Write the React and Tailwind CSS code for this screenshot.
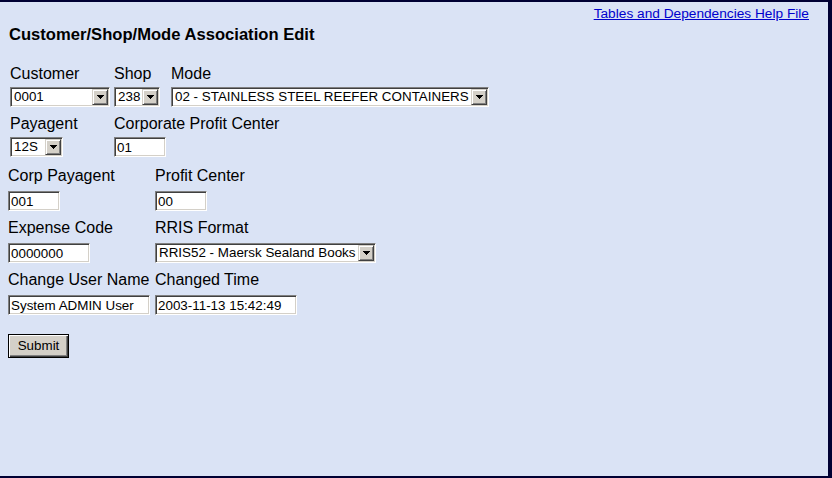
const sunken =
  'border border-t-[#808080] border-l-[#808080] border-r-white border-b-white shadow-[inset_1px_1px_0_#404040,inset_-1px_-1px_0_#d4d0c8] bg-white'

const Arrow = () => (
  <div className="flex h-[16px] w-[16px] shrink-0 items-center justify-center border border-t-[#d4d0c8] border-l-[#d4d0c8] border-r-[#404040] border-b-[#404040] bg-[#d4d0c8] shadow-[inset_1px_1px_0_#ffffff,inset_-1px_-1px_0_#808080]">
    <svg width="7" height="4" viewBox="0 0 7 4" shapeRendering="crispEdges">
      <rect x="0" y="0" width="7" height="1" fill="#000" />
      <rect x="1" y="1" width="5" height="1" fill="#000" />
      <rect x="2" y="2" width="3" height="1" fill="#000" />
      <rect x="3" y="3" width="1" height="1" fill="#000" />
    </svg>
  </div>
)

const Select = ({ value, className }) => (
  <div className={`flex h-[20px] p-[1px] ${sunken} ${className}`}>
    <div className="flex-1 overflow-hidden whitespace-nowrap pl-[2px] text-[13.4px] leading-[16px]">{value}</div>
    <Arrow />
  </div>
)

const Field = ({ value, className }) => (
  <input
    readOnly
    value={value}
    className={`block h-[20px] px-[2px] text-[13.4px] leading-[16px] outline-none ${sunken} ${className}`}
  />
)

const Label = ({ children }) => (
  <div className="h-[18px] whitespace-nowrap text-[16px] leading-[18px]">{children}</div>
)

const App = () => {
  return (
    <div className="h-[478px] w-[832px] overflow-hidden border-t-2 border-b-2 border-r-4 border-[#000033] bg-[#dae3f5] font-['Liberation_Sans',Arial,sans-serif] text-black">
      <div className="flex justify-end pr-[19px] pt-[4px]">
        <a href="#" className="text-[13.7px] leading-[16px] text-[#0000cc] underline">
          Tables and Dependencies Help File
        </a>
      </div>
      <h1 className="ml-[9px] mt-[3px] text-[16.6px] font-bold leading-[19px]">
        Customer/Shop/Mode Association Edit
      </h1>

      {/* customer / shop / mode */}
      <div className="mt-[21px] pl-[10px]">
        <div className="flex">
          <div className="w-[104px]">
            <Label>Customer</Label>
            <Select value="0001" className="mt-[4px] w-[100px]" />
          </div>
          <div className="w-[57px]">
            <Label>Shop</Label>
            <Select value="238" className="mt-[4px] w-[46px]" />
          </div>
          <div>
            <Label>Mode</Label>
            <Select value="02 - STAINLESS STEEL REEFER CONTAINERS" className="mt-[4px] w-[318px]" />
          </div>
        </div>
        <div className="mt-[8px] flex">
          <div className="w-[104px]">
            <Label>Payagent</Label>
            <Select value="12S" className="mt-[4px] w-[53px]" />
          </div>
          <div>
            <Label>Corporate Profit Center</Label>
            <Field value="01" className="mt-[4px] w-[52px]" />
          </div>
        </div>
      </div>

      {/* detail fields */}
      <div className="mt-[10px] pl-[8px]">
        <div className="flex">
          <div className="w-[147px]">
            <Label>Corp Payagent</Label>
            <Field value="001" className="mt-[6px] w-[52px]" />
          </div>
          <div>
            <Label>Profit Center</Label>
            <Field value="00" className="mt-[6px] w-[52px]" />
          </div>
        </div>
        <div className="mt-[8px] flex">
          <div className="w-[147px]">
            <Label>Expense Code</Label>
            <Field value="0000000" className="mt-[6px] w-[82px]" />
          </div>
          <div>
            <Label>RRIS Format</Label>
            <Select value="RRIS52 - Maersk Sealand Books" className="mt-[6px] w-[221px]" />
          </div>
        </div>
        <div className="mt-[8px] flex">
          <div className="w-[147px]">
            <Label>Change User Name</Label>
            <Field value="System ADMIN User" className="mt-[6px] w-[142px]" />
          </div>
          <div>
            <Label>Changed Time</Label>
            <Field value="2003-11-13 15:42:49" className="mt-[6px] w-[142px]" />
          </div>
        </div>
      </div>

      <button className="ml-[8px] mt-[19px] block h-[24px] w-[61px] border border-black bg-[#d4d0c8] text-[13.4px] leading-[16px] shadow-[inset_1px_1px_0_#ffffff,inset_-1px_-1px_0_#404040,inset_-2px_-2px_0_#808080]">
        Submit
      </button>
    </div>
  )
}

export default App
